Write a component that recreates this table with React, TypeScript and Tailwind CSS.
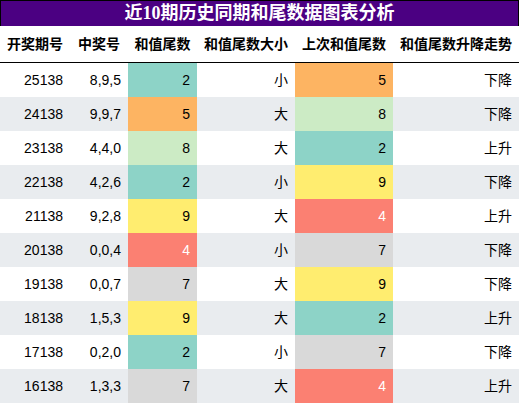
import React from "react";

const colors: Record<string, string> = {
  "2": "bg-[#8dd3c7] text-black",
  "5": "bg-[#fdb462] text-black",
  "8": "bg-[#ccebc5] text-black",
  "9": "bg-[#ffed6f] text-black",
  "4": "bg-[#fb8072] text-white",
  "7": "bg-[#d9d9d9] text-black",
};

const rows = [
  ["25138", "8,9,5", "2", "小", "5", "下降"],
  ["24138", "9,9,7", "5", "大", "8", "下降"],
  ["23138", "4,4,0", "8", "大", "2", "上升"],
  ["22138", "4,2,6", "2", "小", "9", "下降"],
  ["21138", "9,2,8", "9", "大", "4", "上升"],
  ["20138", "0,0,4", "4", "小", "7", "下降"],
  ["19138", "0,0,7", "7", "大", "9", "下降"],
  ["18138", "1,5,3", "9", "大", "2", "上升"],
  ["17138", "0,2,0", "2", "小", "7", "下降"],
  ["16138", "1,3,3", "7", "大", "4", "上升"],
];

const headers = ["开奖期号", "中奖号", "和值尾数", "和值尾数大小", "上次和值尾数", "和值尾数升降走势"];
const widths = ["w-[70px]", "w-[58px]", "w-[69px]", "w-[98px]", "w-[98px]", "w-[126px]"];

const App = () => {
  return (
    <div className="w-[519px] bg-white text-black font-['Liberation_Sans','Noto_Sans_CJK_SC',sans-serif]">
      {/* title */}
      <div className="h-[26px] bg-[#4b0082] border-t border-x border-black flex items-center justify-center text-white font-bold text-[18px] font-['Liberation_Serif','Noto_Sans_CJK_SC',serif]">
        近10期历史同期和尾数据图表分析
      </div>

      {/* header */}
      <div className="flex h-[37px] border-b border-black">
        {headers.map((h, i) => (
          <div key={h} className={`${widths[i]} flex items-center justify-center text-[14px] font-bold whitespace-nowrap`}>
            {h}
          </div>
        ))}
      </div>

      {/* rows */}
      {rows.map((r, idx) => (
        <div key={r[0]} className={`flex h-[34px] text-[14px] ${idx % 2 === 1 ? "bg-[#e9ecef]" : "bg-white"}`}>
          {r.map((c, i) => {
            const color = i === 2 || i === 4 ? colors[c] : "";
            return (
              <div key={i} className={`${widths[i]} ${color} flex items-center justify-end pr-[7px]`}>
                {c}
              </div>
            );
          })}
        </div>
      ))}
    </div>
  );
};

export default App;
